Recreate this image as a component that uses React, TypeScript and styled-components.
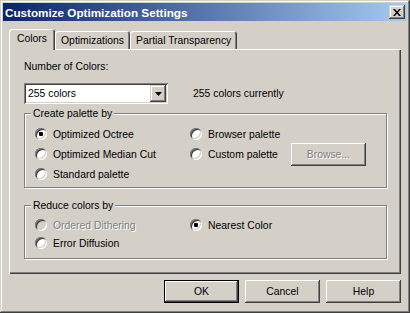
import styled, { createGlobalStyle, css } from 'styled-components';

const FACE = '#d4d0c8';
const LIGHT = '#ffffff';
const SHADOW = '#808080';
const DARK = '#404040';

const GlobalStyle = createGlobalStyle`
  html, body {
    margin: 0;
    padding: 0;
    background: ${FACE};
  }
  body {
    font-family: "Liberation Sans", Arial, sans-serif;
    font-size: 10.4px;
    color: #000;
  }
`;

const raised = css`
  box-shadow:
    inset -1px -1px ${DARK},
    inset 1px 1px ${LIGHT},
    inset -2px -2px ${SHADOW};
`;

const embossed = css`
  color: ${SHADOW};
  text-shadow: 1px 1px 0 ${LIGHT};
`;

const Window = styled.div`
  width: 410px;
  height: 313px;
  box-sizing: border-box;
  padding: 3px;
  background: ${FACE};
  box-shadow:
    inset -1px -1px ${DARK},
    inset 1px 1px ${FACE},
    inset -2px -2px ${SHADOW},
    inset 2px 2px ${LIGHT};
  display: flex;
  flex-direction: column;
`;

const TitleBar = styled.div`
  height: 18px;
  display: flex;
  align-items: center;
  justify-content: space-between;
  padding: 0 2px;
  background: linear-gradient(to right, #0a246a, #a6caf0);
  color: #fff;
  font-weight: bold;
  font-size: 11.7px;
`;

const CloseButton = styled.div`
  width: 16px;
  height: 14px;
  background: ${FACE};
  box-shadow:
    inset -1px -1px ${DARK},
    inset 1px 1px ${FACE},
    inset -2px -2px ${SHADOW},
    inset 2px 2px ${LIGHT};
  display: grid;
  place-items: center;
`;

const Body = styled.div`
  flex: 1;
  display: flex;
  flex-direction: column;
  padding: 8px 6px 7px;
`;

const TabStrip = styled.div`
  height: 20px;
  display: flex;
  align-items: flex-start;
  padding-left: 2px;
`;

const Tab = styled.div<{ $active?: boolean }>`
  box-sizing: border-box;
  background: ${FACE};
  border-radius: 3px 3px 0 0;
  box-shadow:
    inset 1px 1px ${LIGHT},
    inset -1px 0 ${DARK},
    inset -2px 0 ${SHADOW};
  display: flex;
  align-items: center;
  ${({ $active }) =>
    $active
      ? css`
          position: relative;
          z-index: 1;
          height: 21px;
          margin: 0 0 -1px -2px;
          padding: 0 8px 2px 8px;
        `
      : css`
          height: 18px;
          margin-top: 2px;
          padding: 1px 6px 0 6px;
        `}
`;

const Panel = styled.div`
  height: 225px;
  box-sizing: border-box;
  padding: 11px 14px 0 15px;
  box-shadow:
    inset 1px 1px ${LIGHT},
    inset -1px -1px ${DARK},
    inset -2px -2px ${SHADOW};
  display: flex;
  flex-direction: column;
`;

const FieldLabel = styled.div`
  line-height: 13px;
`;

const ComboRow = styled.div`
  margin-top: 10px;
  display: flex;
  align-items: center;
`;

const Combo = styled.div`
  width: 144px;
  height: 21px;
  box-sizing: border-box;
  background: #fff;
  box-shadow:
    inset 1px 1px ${SHADOW},
    inset -1px -1px ${LIGHT},
    inset 2px 2px ${DARK},
    inset -2px -2px ${FACE};
  display: flex;
  align-items: center;
  justify-content: space-between;
  padding: 2px 2px 2px 4px;
`;

const ComboArrow = styled.div`
  width: 16px;
  height: 17px;
  background: ${FACE};
  box-shadow:
    inset -1px -1px ${DARK},
    inset 1px 1px ${FACE},
    inset -2px -2px ${SHADOW},
    inset 2px 2px ${LIGHT};
  display: grid;
  place-items: center;
`;

const Status = styled.span`
  margin-left: 25px;
`;

const GroupBox = styled.div<{ $height: number; $top: number; $padTop: number; $row: number }>`
  position: relative;
  box-sizing: border-box;
  margin-top: ${({ $top }) => $top}px;
  height: ${({ $height }) => $height}px;
  border: 1px solid ${SHADOW};
  box-shadow: inset 1px 1px ${LIGHT}, 1px 1px ${LIGHT};
  padding: ${({ $padTop }) => $padTop}px 0 0 10px;
  display: grid;
  grid-template-columns: 155px 1fr;
  grid-auto-rows: ${({ $row }) => $row}px;
`;

const Legend = styled.span`
  position: absolute;
  top: -7px;
  left: 6px;
  padding: 0 2px;
  line-height: 13px;
  background: ${FACE};
`;

const Option = styled.label<{ $disabled?: boolean }>`
  display: flex;
  align-items: center;
  gap: 6px;
  ${({ $disabled }) => $disabled && embossed}
`;

const Radio = styled.span<{ $checked?: boolean; $disabled?: boolean }>`
  position: relative;
  flex: none;
  width: 12px;
  height: 12px;
  border-radius: 50%;
  background: ${({ $disabled }) => ($disabled ? FACE : '#fff')};
  box-shadow:
    inset 1px 1px ${SHADOW},
    inset -1px -1px ${LIGHT},
    inset 2px 2px ${DARK},
    inset -2px -2px ${FACE};
  ${({ $checked }) =>
    $checked &&
    css`
      &::after {
        content: '';
        position: absolute;
        left: 4px;
        top: 4px;
        width: 4px;
        height: 4px;
        border-radius: 1px;
        background: #000;
      }
    `}
`;

const InlineRow = styled.div`
  display: flex;
  align-items: center;
  gap: 13px;
`;

const Button = styled.div<{ $default?: boolean; $disabled?: boolean }>`
  width: 75px;
  height: 23px;
  box-sizing: border-box;
  background: ${FACE};
  display: grid;
  place-items: center;
  ${raised}
  ${({ $default }) =>
    $default &&
    css`
      border: 1px solid #000;
    `}
  ${({ $disabled }) => $disabled && embossed}
`;

const ButtonRow = styled.div`
  margin-top: 6px;
  display: flex;
  justify-content: flex-end;
  gap: 6px;
`;

type RadioItemProps = { label: string; checked?: boolean; disabled?: boolean };

const RadioItem = ({ label, checked, disabled }: RadioItemProps) => (
  <Option $disabled={disabled}>
    <Radio $checked={checked} $disabled={disabled} />
    {label}
  </Option>
);

const App = () => (
  <>
    <GlobalStyle />
    <Window>
      <TitleBar>
        <span>Customize Optimization Settings</span>
        <CloseButton>
          <svg width="8" height="7" viewBox="0 0 8 7">
            <path d="M0 0h2l2 2.5 2-2.5h2L5 3.5 8 7H6L4 4.5 2 7H0l3-3.5z" fill="#000" />
          </svg>
        </CloseButton>
      </TitleBar>
      <Body>
        <TabStrip>
          <Tab $active>Colors</Tab>
          <Tab>Optimizations</Tab>
          <Tab>Partial Transparency</Tab>
        </TabStrip>
        <Panel>
          <FieldLabel>Number of Colors:</FieldLabel>
          <ComboRow>
            <Combo>
              <span>255 colors</span>
              <ComboArrow>
                <svg width="7" height="4" viewBox="0 0 7 4">
                  <path d="M0 0h7L3.5 4z" fill="#000" />
                </svg>
              </ComboArrow>
            </Combo>
            <Status>255 colors currently</Status>
          </ComboRow>

          <GroupBox $height={75} $top={9} $padTop={10} $row={20}>
            <Legend>Create palette by</Legend>
            <RadioItem label="Optimized Octree" checked />
            <RadioItem label="Browser palette" />
            <RadioItem label="Optimized Median Cut" />
            <InlineRow>
              <RadioItem label="Custom palette" />
              <Button $disabled>Browse...</Button>
            </InlineRow>
            <RadioItem label="Standard palette" />
          </GroupBox>

          <GroupBox $height={54} $top={17} $padTop={10} $row={18}>
            <Legend>Reduce colors by</Legend>
            <RadioItem label="Ordered Dithering" disabled />
            <RadioItem label="Nearest Color" checked />
            <RadioItem label="Error Diffusion" />
          </GroupBox>
        </Panel>
        <ButtonRow>
          <Button $default>OK</Button>
          <Button>Cancel</Button>
          <Button>Help</Button>
        </ButtonRow>
      </Body>
    </Window>
  </>
);

export default App;
